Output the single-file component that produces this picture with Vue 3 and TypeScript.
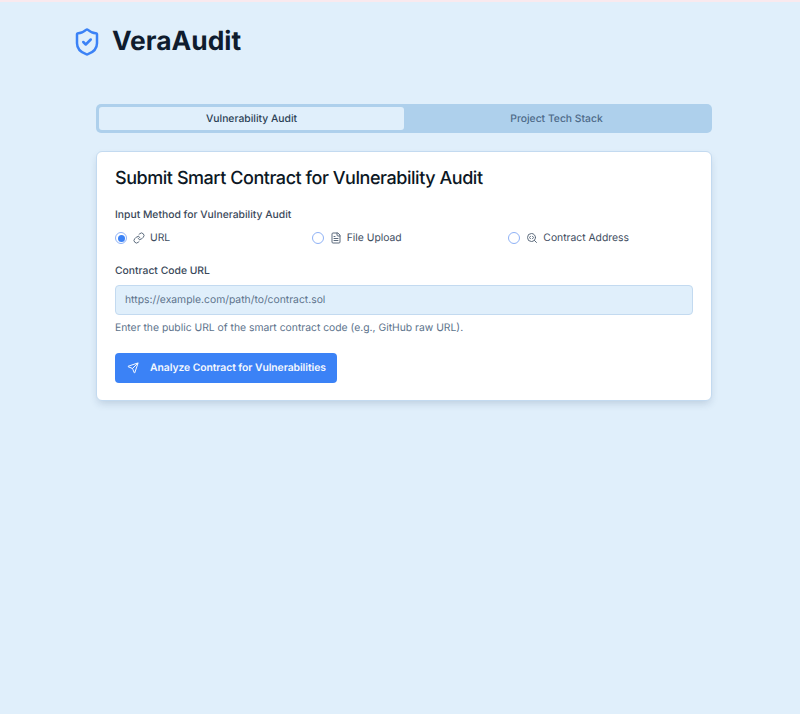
<script setup lang="ts">
import { ref } from 'vue'
const method = ref('url')
const tab = ref('audit')
</script>

<template>
  <div class="page">
    <header class="header">
      <svg class="logo" viewBox="0 0 24 24" fill="none" stroke="#3b82f6" stroke-width="2" stroke-linecap="round" stroke-linejoin="round">
        <path d="M20 13c0 5-3.5 7.5-7.66 8.95a1 1 0 0 1-.67-.01C7.5 20.5 4 18 4 13V6a1 1 0 0 1 1-1c2 0 4.5-1.2 6.24-2.72a1.17 1.17 0 0 1 1.52 0C14.51 3.81 17 5 19 5a1 1 0 0 1 1 1z"/>
        <path d="m9 12 2 2 4-4"/>
      </svg>
      <h1 class="brand">VeraAudit</h1>
    </header>
    <main class="main">
      <div class="tabs">
        <button class="tab" :class="{ active: tab === 'audit' }" @click="tab = 'audit'">Vulnerability Audit</button>
        <button class="tab" :class="{ active: tab === 'stack' }" @click="tab = 'stack'">Project Tech Stack</button>
      </div>
      <section class="card">
        <h2 class="title">Submit Smart Contract for Vulnerability Audit</h2>
        <div class="label method-label">Input Method for Vulnerability Audit</div>
        <div class="radios">
          <label class="radio-row" @click="method = 'url'">
            <span class="radio" :class="{ on: method === 'url' }"></span>
            <svg class="ri" viewBox="0 0 24 24" fill="none" stroke="currentColor" stroke-width="2" stroke-linecap="round" stroke-linejoin="round">
              <path d="M10 13a5 5 0 0 0 7.54.54l3-3a5 5 0 0 0-7.07-7.07l-1.72 1.71"/>
              <path d="M14 11a5 5 0 0 0-7.54-.54l-3 3a5 5 0 0 0 7.07 7.07l1.71-1.71"/>
            </svg>
            <span>URL</span>
          </label>
          <label class="radio-row" @click="method = 'file'">
            <span class="radio" :class="{ on: method === 'file' }"></span>
            <svg class="ri" viewBox="0 0 24 24" fill="none" stroke="currentColor" stroke-width="2" stroke-linecap="round" stroke-linejoin="round">
              <path d="M15 2H6a2 2 0 0 0-2 2v16a2 2 0 0 0 2 2h12a2 2 0 0 0 2-2V7Z"/>
              <path d="M14 2v4a2 2 0 0 0 2 2h4"/>
              <path d="M10 9H8"/><path d="M16 13H8"/><path d="M16 17H8"/>
            </svg>
            <span>File Upload</span>
          </label>
          <label class="radio-row" @click="method = 'addr'">
            <span class="radio" :class="{ on: method === 'addr' }"></span>
            <svg class="ri" viewBox="0 0 24 24" fill="none" stroke="currentColor" stroke-width="2" stroke-linecap="round" stroke-linejoin="round">
              <path d="m13 13.5 2-2.5-2-2.5"/>
              <path d="m21 21-4.3-4.3"/>
              <path d="M9 8.5 7 11l2 2.5"/>
              <circle cx="11" cy="11" r="8"/>
            </svg>
            <span>Contract Address</span>
          </label>
        </div>
        <div class="label url-label">Contract Code URL</div>
        <input class="input" type="text" placeholder="https://example.com/path/to/contract.sol" />
        <p class="hint">Enter the public URL of the smart contract code (e.g., GitHub raw URL).</p>
        <button class="submit">
          <svg class="si" viewBox="0 0 24 24" fill="none" stroke="currentColor" stroke-width="2" stroke-linecap="round" stroke-linejoin="round">
            <path d="M14.536 21.686a.5.5 0 0 0 .937-.024l6.5-19a.496.496 0 0 0-.635-.635l-19 6.5a.5.5 0 0 0-.024.937l7.93 3.18a2 2 0 0 1 1.112 1.11z"/>
            <path d="m21.854 2.147-10.94 10.939"/>
          </svg>
          <span>Analyze Contract for Vulnerabilities</span>
        </button>
      </section>
    </main>
  </div>
</template>

<style>
html, body { margin: 0; background: #e0effb; }
</style>

<style scoped>
.page {
  min-height: 714px;
  box-sizing: border-box;
  background: #e0effb;
  border-top: 2px solid #f9e9ee;
  font-family: Inter, "Liberation Sans", sans-serif;
  color: #0f1c2e;
  text-rendering: geometricPrecision;
}
.header {
  display: flex;
  align-items: center;
  gap: 10px;
  padding: 23px 0 0 72px;
  height: 34px;
}
.logo { width: 30px; height: 30px; flex: none; }
.brand { margin: 0 0 2px; font-size: 26.4px; line-height: 32px; font-weight: 700; color: #0f1c2e; }
.main { width: 616px; margin: 45px 0 0 96px; }
.tabs {
  display: grid;
  grid-template-columns: 1fr 1fr;
  height: 29px;
  box-sizing: border-box;
  padding: 3px;
  border-radius: 5px;
  background: #aed0ec;
}
.tab {
  border: 0;
  border-radius: 3px;
  background: transparent;
  font: 500 10.35px Inter, "Liberation Sans", sans-serif;
  text-rendering: geometricPrecision;
  color: #4d6a88;
  padding: 0;
}
.tab.active { background: #e0effb; color: #2b3f55; }
.card {
  margin-top: 18px;
  height: 250px;
  box-sizing: border-box;
  padding: 16px 18px 0;
  background: #fff;
  border: 1px solid #c3daf0;
  border-radius: 6px;
  box-shadow: 0 4px 8px -2px rgba(30, 60, 100, 0.2);
}
.title { margin: 0; font-size: 18px; line-height: 21px; font-weight: 500; letter-spacing: -0.45px; color: #0c1724; }
.label { font-size: 10.35px; line-height: 14px; font-weight: 500; color: #3a4859; }
.method-label { margin-top: 19px; }
.radios { display: grid; grid-template-columns: repeat(3, 1fr); gap: 0 12px; margin-top: 9px; height: 14px; align-items: center; }
.radio-row { display: flex; align-items: center; font-size: 10.35px; color: #3d4c5e; }
.radio {
  width: 10px; height: 10px; flex: none;
  border: 1px solid #8fb2f6; border-radius: 50%;
  display: flex; align-items: center; justify-content: center;
  margin-right: 6px;
}
.radio.on::after { content: ""; width: 7px; height: 7px; border-radius: 50%; background: #3b82f6; }
.ri { width: 12px; height: 12px; margin-right: 5px; color: #5c6b7d; flex: none; }
.url-label { margin-top: 19px; }
.input {
  display: block;
  width: 100%;
  height: 30px;
  box-sizing: border-box;
  margin-top: 7px;
  padding: 0 9px;
  background: #e0effb;
  border: 1px solid #c3daf0;
  border-radius: 4px;
  font: 400 10.35px Inter, "Liberation Sans", sans-serif;
  text-rendering: geometricPrecision;
  outline: none;
}
.input::placeholder { color: #5d738c; opacity: 1; }
.hint { margin: 6px 0 0; font-size: 10.35px; line-height: 14px; color: #5d738c; }
.submit {
  display: flex;
  align-items: center;
  gap: 11px;
  margin-top: 18px;
  height: 30px;
  padding: 0 11px 0 12px;
  border: 0;
  border-radius: 4px;
  background: #3b82f6;
  color: #f4f8fe;
  font: 600 10.35px Inter, "Liberation Sans", sans-serif;
  letter-spacing: -0.05px;
  text-rendering: geometricPrecision;
}
.si { width: 12px; height: 12px; flex: none; }
</style>
